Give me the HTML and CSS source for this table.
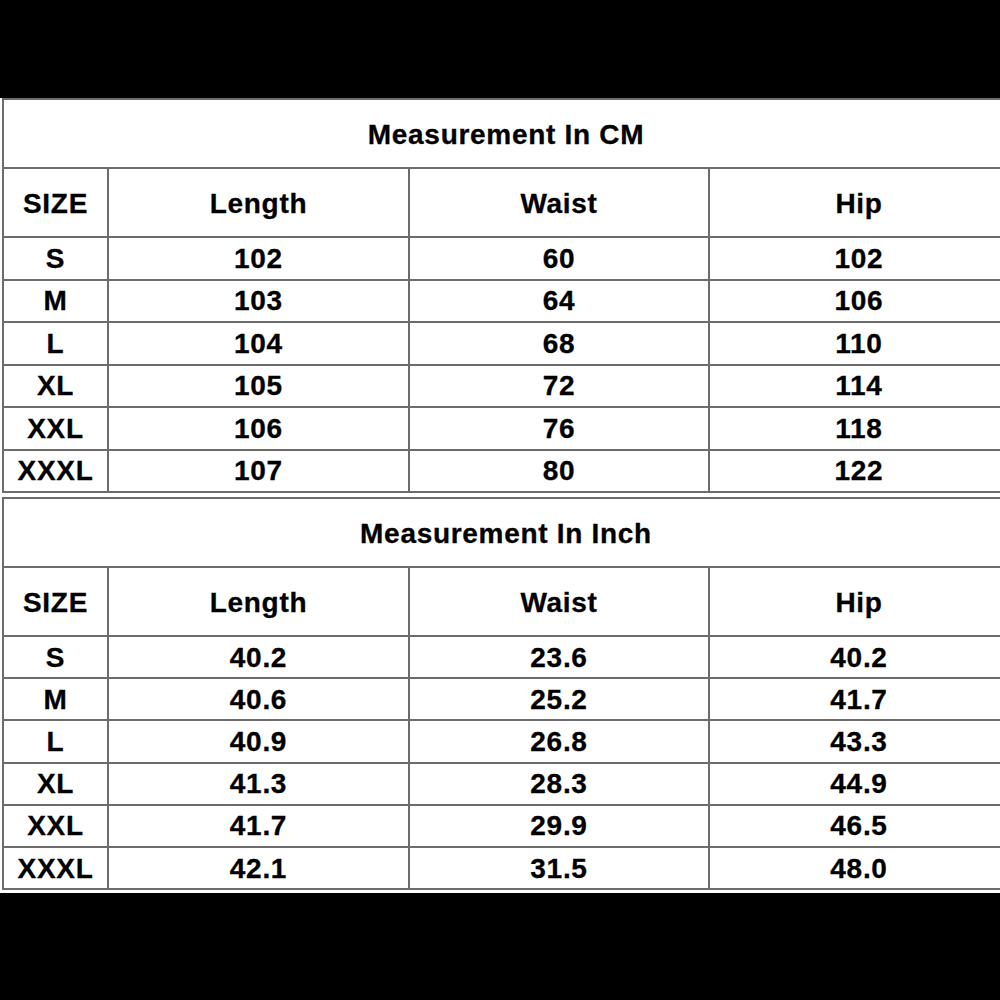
FILE: index.html
```html
<!DOCTYPE html>
<html>
<head>
<meta charset="utf-8">
<link rel="stylesheet" href="styles.css">
</head>
<body>
<div class="page">
  <div class="sheet">
    <div class="chart chart-cm">
      <div class="cell title">Measurement In CM</div>
      <div class="cell head">SIZE</div><div class="cell head">Length</div><div class="cell head">Waist</div><div class="cell head">Hip</div>
      <div class="cell">S</div><div class="cell">102</div><div class="cell">60</div><div class="cell">102</div>
      <div class="cell">M</div><div class="cell">103</div><div class="cell">64</div><div class="cell">106</div>
      <div class="cell">L</div><div class="cell">104</div><div class="cell">68</div><div class="cell">110</div>
      <div class="cell">XL</div><div class="cell">105</div><div class="cell">72</div><div class="cell">114</div>
      <div class="cell">XXL</div><div class="cell">106</div><div class="cell">76</div><div class="cell">118</div>
      <div class="cell">XXXL</div><div class="cell">107</div><div class="cell">80</div><div class="cell">122</div>
    </div>
    <div class="chart chart-inch">
      <div class="cell title">Measurement In Inch</div>
      <div class="cell head">SIZE</div><div class="cell head">Length</div><div class="cell head">Waist</div><div class="cell head">Hip</div>
      <div class="cell">S</div><div class="cell">40.2</div><div class="cell">23.6</div><div class="cell">40.2</div>
      <div class="cell">M</div><div class="cell">40.6</div><div class="cell">25.2</div><div class="cell">41.7</div>
      <div class="cell">L</div><div class="cell">40.9</div><div class="cell">26.8</div><div class="cell">43.3</div>
      <div class="cell">XL</div><div class="cell">41.3</div><div class="cell">28.3</div><div class="cell">44.9</div>
      <div class="cell">XXL</div><div class="cell">41.7</div><div class="cell">29.9</div><div class="cell">46.5</div>
      <div class="cell">XXXL</div><div class="cell">42.1</div><div class="cell">31.5</div><div class="cell">48.0</div>
    </div>
  </div>
</div>
</body>
</html>
```

FILE: styles.css
```css
html, body {
  margin: 0;
  padding: 0;
  background: #000;
}
.page {
  width: 1000px;
  height: 1000px;
  padding-top: 98px;
  box-sizing: border-box;
  overflow: hidden;
}
.sheet {
  background: #fff;
  height: 795px;
  padding-left: 2px;
  box-sizing: border-box;
  display: flex;
  flex-direction: column;
  gap: 4px;
  overflow: hidden;
}
.chart {
  display: grid;
  grid-template-columns: 105px 301px 300px 300px;
  width: 1008px;
  border-left: 2px solid #6c6c6c;
  border-top: 2px solid #6c6c6c;
  font-family: "Liberation Sans", Arial, sans-serif;
  font-weight: bold;
  font-size: 28px;
  letter-spacing: 0.7px;
  color: #000;
  -webkit-text-stroke: 0.3px #000;
}
.chart-cm {
  grid-template-rows: 69px 69px repeat(6, 42.5px);
}
.chart-inch {
  grid-template-rows: 69px 69px repeat(6, 42.2px);
}
.cell {
  box-sizing: border-box;
  border-right: 2px solid #6c6c6c;
  border-bottom: 2px solid #6c6c6c;
  display: flex;
  align-items: center;
  justify-content: center;
  line-height: 1;
  padding-top: 1px;
}
.title,
.head {
  padding-top: 3px;
}
.title {
  grid-column: 1 / -1;
}
```
